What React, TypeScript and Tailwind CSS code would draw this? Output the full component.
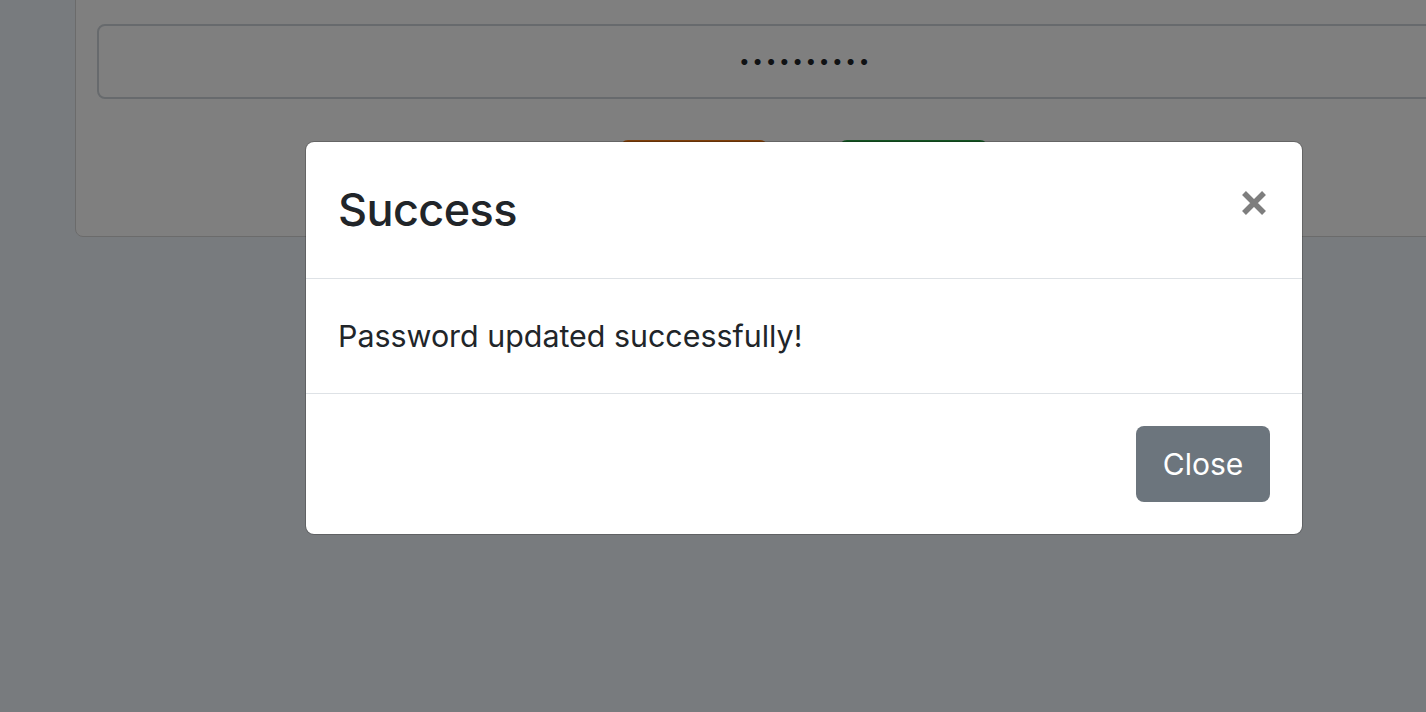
import React from "react";

export default function App() {
  return (
    <div
      className="relative w-[1426px] h-[712px] overflow-hidden bg-[#f0f6fc]"
      style={{ fontFamily: "Inter, 'Noto Sans', 'Liberation Sans', sans-serif" }}
    >
      {/* underlying page */}
      <div className="pl-[75px]">
        <div className="-mt-[41px] w-[1458px] shrink-0 rounded-[8px] border border-[#d6d6d6] bg-white px-[21px] pt-[21px] pb-[20px]">
          <div className="h-[43px]" />
          <div className="flex h-[75px] items-center justify-center rounded-[8px] border-2 border-[#ced4da] bg-white text-[#212529]">
            <span className="text-[19px] tracking-[2.6px] leading-none pl-[3px]">••••••••••</span>
          </div>
          <div className="mt-[41px] flex justify-center gap-[71px]">
            <div className="h-[76px] w-[148px] rounded-[8px] bg-[#fd7e14]" />
            <div className="h-[76px] w-[149px] rounded-[8px] bg-[#28a745]" />
          </div>
        </div>
      </div>

      {/* backdrop */}
      <div className="absolute inset-0 bg-black/50" />

      {/* modal */}
      <div className="absolute left-[305px] top-[141px] w-[998px] rounded-[9px] border border-black/20 bg-white bg-clip-padding text-[#212529]">
        <div className="flex items-start justify-between border-b border-[#dee2e6] p-[32px]">
          <h5 className="m-0 text-[45px] font-medium tracking-[-0.6px] leading-[72px]">Success</h5>
          <button className="mt-[16px] mr-[3px] flex h-[26px] w-[26px] items-center justify-center opacity-50">
            <svg width="26" height="26" viewBox="0 0 26 26">
              <path d="M3 3 L23 23 M23 3 L3 23" stroke="#000" strokeWidth="5.5" strokeLinecap="butt" />
            </svg>
          </button>
        </div>
        <div className="border-b border-[#dee2e6] px-[32px] py-[32px]">
          <p className="m-0 text-[30.4px] leading-[50px]">Password updated successfully!</p>
        </div>
        <div className="flex justify-end p-[32px]">
          <button className="h-[76px] w-[134px] rounded-[8px] bg-[#6c757d] text-[30px] text-white">
            Close
          </button>
        </div>
      </div>
    </div>
  );
}
